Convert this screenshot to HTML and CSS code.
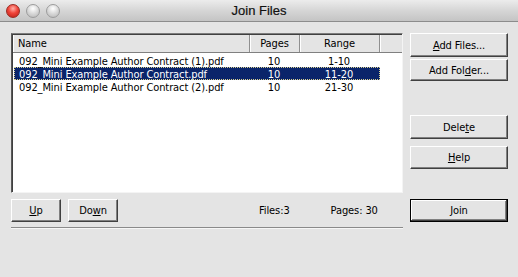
FILE: index.html
```
<!DOCTYPE html>
<html>
<head>
<meta charset="utf-8">
<link rel="stylesheet" href="styles.css">
</head>
<body>
<div class="window">
  <div class="titlebar">
    <div class="lights">
      <span class="light red"></span>
      <span class="light gray"></span>
      <span class="light gray"></span>
    </div>
    <div class="title">Join Files</div>
  </div>
  <div class="content">
    <div class="left">
      <div class="list">
        <div class="header">
          <div class="hcell hname">Name</div>
          <div class="hcell hpages">Pages</div>
          <div class="hcell hrange">Range</div>
          <div class="hcell hblank"></div>
        </div>
        <div class="rows">
          <div class="row"><span class="cname">092_Mini Example Author Contract (1).pdf</span><span class="cpages">10</span><span class="crange">1-10</span></div>
          <div class="row sel"><span class="cname">092_Mini Example Author Contract.pdf</span><span class="cpages">10</span><span class="crange">11-20</span></div>
          <div class="row"><span class="cname">092_Mini Example Author Contract (2).pdf</span><span class="cpages">10</span><span class="crange">21-30</span></div>
        </div>
      </div>
      <div class="bottom">
        <button class="btn small"><u>U</u>p</button>
        <button class="btn small">Do<u>w</u>n</button>
        <span class="stat files">Files:3</span>
        <span class="stat pages">Pages: 30</span>
      </div>
      <div class="sep"></div>
    </div>
    <div class="right">
      <button class="btn b-addfiles"><u>A</u>dd Files...</button>
      <button class="btn b-addfolder">Add Fol<u>d</u>er...</button>
      <button class="btn b-delete">Dele<u>t</u>e</button>
      <button class="btn b-help"><u>H</u>elp</button>
      <button class="btn default b-join"><u>J</u>oin</button>
    </div>
  </div>
</div>
</body>
</html>
```
FILE: styles.css
```
html, body {
  margin: 0;
  padding: 0;
}
body {
  width: 518px;
  height: 277px;
  overflow: hidden;
  background: #e4e4e4;
  font-family: "DejaVu Sans Condensed", "DejaVu Sans", sans-serif;
  font-stretch: condensed;
  font-size: 11px;
  letter-spacing: -0.1px;
  color: #000;
}
.window {
  width: 518px;
  height: 277px;
  background: #e4e4e4;
}
.titlebar {
  height: 21px;
  border-bottom: 1px solid #8c8c8c;
  background: linear-gradient(#ececec, #d6d6d6 50%, #c4c4c4);
  display: flex;
  align-items: center;
  position: relative;
}
.lights {
  display: flex;
  gap: 6px;
  padding-left: 6px;
}
.light {
  width: 14px;
  height: 14px;
  border-radius: 50%;
  box-sizing: border-box;
}
.light.red {
  background: radial-gradient(circle at 50% 30%, #ffb0a8 0, #f0453a 45%, #b81d14 100%);
  border: 1px solid #9a2a22;
}
.light.gray {
  background: radial-gradient(circle at 50% 30%, #ffffff 0, #d8d8d8 50%, #b4b4b4 100%);
  border: 1px solid #9c9c9c;
}
.title {
  position: absolute;
  left: 0;
  right: 0;
  top: 0;
  height: 21px;
  line-height: 22px;
  text-align: center;
  font-family: "Liberation Sans", sans-serif;
  font-stretch: normal;
  letter-spacing: 0;
  font-size: 13px;
  color: #111;
  -webkit-text-stroke: 0.2px #111;
}
.content {
  display: flex;
  padding: 11px 0 0 11px;
  gap: 7px;
}
.left {
  width: 392px;
  display: flex;
  flex-direction: column;
}
.list {
  height: 160px;
  box-sizing: border-box;
  background: #fff;
  border-top: 1px solid #7c7c7c;
  border-left: 1px solid #5a5a5a;
  border-right: 1px solid #f4f4f4;
  border-bottom: 1px solid #f4f4f4;
  box-shadow: inset 1px 1px 0 #404040;
  padding: 1px 0 0 1px;
}
.header {
  display: flex;
  height: 17px;
  background: #e4e4e4;
  border-bottom: 1px solid #808080;
}
.hcell {
  box-sizing: border-box;
  height: 17px;
  line-height: 17px;
  border-right: 1px solid #909090;
  box-shadow: inset 1px 0 0 #fff;
  text-align: center;
}
.hname {
  width: 237px;
  text-align: left;
  padding-left: 5px;
}
.hpages { width: 50px; }
.hrange { width: 80px; }
.hblank { flex: 1; border-right: none; }
.rows {
  padding: 1px 0 0 1px;
}
.row {
  display: flex;
  width: 366px;
  height: 13px;
  line-height: 13px;
  box-sizing: border-box;
  border: 1px solid transparent;
}
.row.sel {
  background: #0a246a;
  color: #fff;
  border: 1px dotted #d8d090;
}
.cname {
  width: 234px;
  padding-left: 4px;
  box-sizing: border-box;
  white-space: nowrap;
}
.cpages {
  width: 50px;
  text-align: center;
}
.crange {
  flex: 1;
  text-align: center;
}
.bottom {
  display: flex;
  align-items: center;
  margin-top: 6px;
  height: 23px;
}
.btn {
  font: inherit;
  font-stretch: inherit;
  letter-spacing: inherit;
  color: #000;
  background: #e4e4e4;
  box-sizing: border-box;
  border: 1px solid;
  border-color: #ffffff #404040 #404040 #ffffff;
  box-shadow: inset -1px -1px 0 #808080;
  padding: 0;
  margin: 0;
  text-align: center;
}
.btn u {
  text-decoration: underline;
  text-underline-offset: 1px;
}
.btn.small {
  width: 50px;
  height: 23px;
  margin-right: 7px;
}
.stat.files {
  margin-left: 134px;
}
.stat.pages {
  margin-left: 41px;
}
.sep {
  margin-top: 5px;
  height: 1px;
  background: #8a8a8a;
  box-shadow: 0 1px 0 #f6f6f6;
}
.right {
  width: 98px;
  display: flex;
  flex-direction: column;
}
.right .btn {
  width: 98px;
}
.b-addfiles { height: 24px; }
.b-addfolder { height: 22px; margin-top: 2px; }
.b-delete { height: 24px; margin-top: 34px; }
.b-help { height: 23px; margin-top: 7px; }
.b-join { height: 23px; margin-top: 30px; }
.btn.default {
  border: 1px solid #000;
  box-shadow: inset -1px -1px 0 #404040, inset 1px 1px 0 #ffffff, inset -2px -2px 0 #808080;
}
```
